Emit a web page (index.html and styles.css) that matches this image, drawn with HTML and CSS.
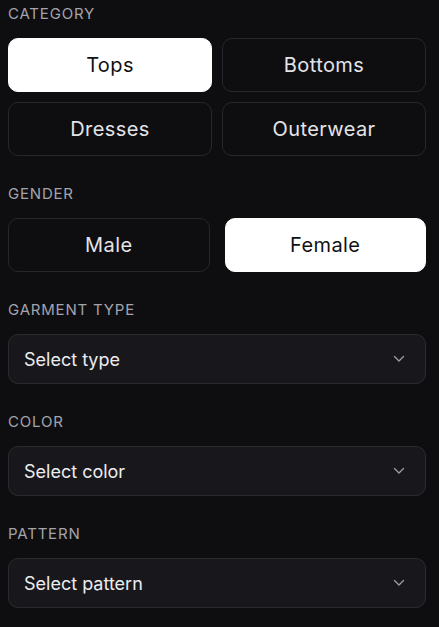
FILE: index.html
```html
<!DOCTYPE html>
<html>
<head>
<meta charset="utf-8">
<link rel="stylesheet" href="styles.css">
</head>
<body>
<div class="panel">
  <section class="section">
    <div class="label">CATEGORY</div>
    <div class="grid">
      <button class="opt active">Tops</button>
      <button class="opt">Bottoms</button>
      <button class="opt">Dresses</button>
      <button class="opt">Outerwear</button>
    </div>
  </section>
  <section class="section">
    <div class="label">GENDER</div>
    <div class="grid gender">
      <button class="opt">Male</button>
      <button class="opt active">Female</button>
    </div>
  </section>
  <section class="section">
    <div class="label">GARMENT TYPE</div>
    <div class="select"><span>Select type</span><svg class="chev" viewBox="0 0 12 8" width="12" height="8"><path d="M1.5 1.5 L6 6 L10.5 1.5" fill="none" stroke="#9a9aa2" stroke-width="1.4" stroke-linecap="round" stroke-linejoin="round"/></svg></div>
  </section>
  <section class="section">
    <div class="label">COLOR</div>
    <div class="select"><span>Select color</span><svg class="chev" viewBox="0 0 12 8" width="12" height="8"><path d="M1.5 1.5 L6 6 L10.5 1.5" fill="none" stroke="#9a9aa2" stroke-width="1.4" stroke-linecap="round" stroke-linejoin="round"/></svg></div>
  </section>
  <section class="section">
    <div class="label">PATTERN</div>
    <div class="select"><span>Select pattern</span><svg class="chev" viewBox="0 0 12 8" width="12" height="8"><path d="M1.5 1.5 L6 6 L10.5 1.5" fill="none" stroke="#9a9aa2" stroke-width="1.4" stroke-linecap="round" stroke-linejoin="round"/></svg></div>
  </section>
</div>
</body>
</html>
```
FILE: styles.css
```css
html, body {
  margin: 0;
  padding: 0;
  background: #0e0e11;
}
body {
  font-family: "Inter", "Noto Sans", sans-serif;
  color: #e8e8ec;
}
.panel {
  width: 418px;
  padding: 5px 0 0 8px;
  display: flex;
  flex-direction: column;
  gap: 29px;
}
.section {
  display: flex;
  flex-direction: column;
  gap: 15px;
}
.label {
  font-size: 15px;
  line-height: 18px;
  color: #a3a3ab;
  letter-spacing: 0.8px;
}
.grid {
  display: grid;
  grid-template-columns: 1fr 1fr;
  gap: 10px;
}
.grid.gender {
  column-gap: 15px;
}
.opt {
  height: 54px;
  border: 1px solid #26262c;
  border-radius: 10px;
  background: #0e0e11;
  color: #e4e4e8;
  font-family: inherit;
  font-size: 20px;
  letter-spacing: 0.4px;
  padding: 0;
}
.opt.active {
  background: #ffffff;
  border-color: #ffffff;
  color: #111114;
}
.select {
  height: 50px;
  box-sizing: border-box;
  border: 1px solid #2a2a31;
  border-radius: 10px;
  background: #18181c;
  display: flex;
  align-items: center;
  justify-content: space-between;
  padding: 0 20px 0 15px;
  font-size: 18px;
  color: #ececf0;
}
.chev {
  display: block;
}
```
